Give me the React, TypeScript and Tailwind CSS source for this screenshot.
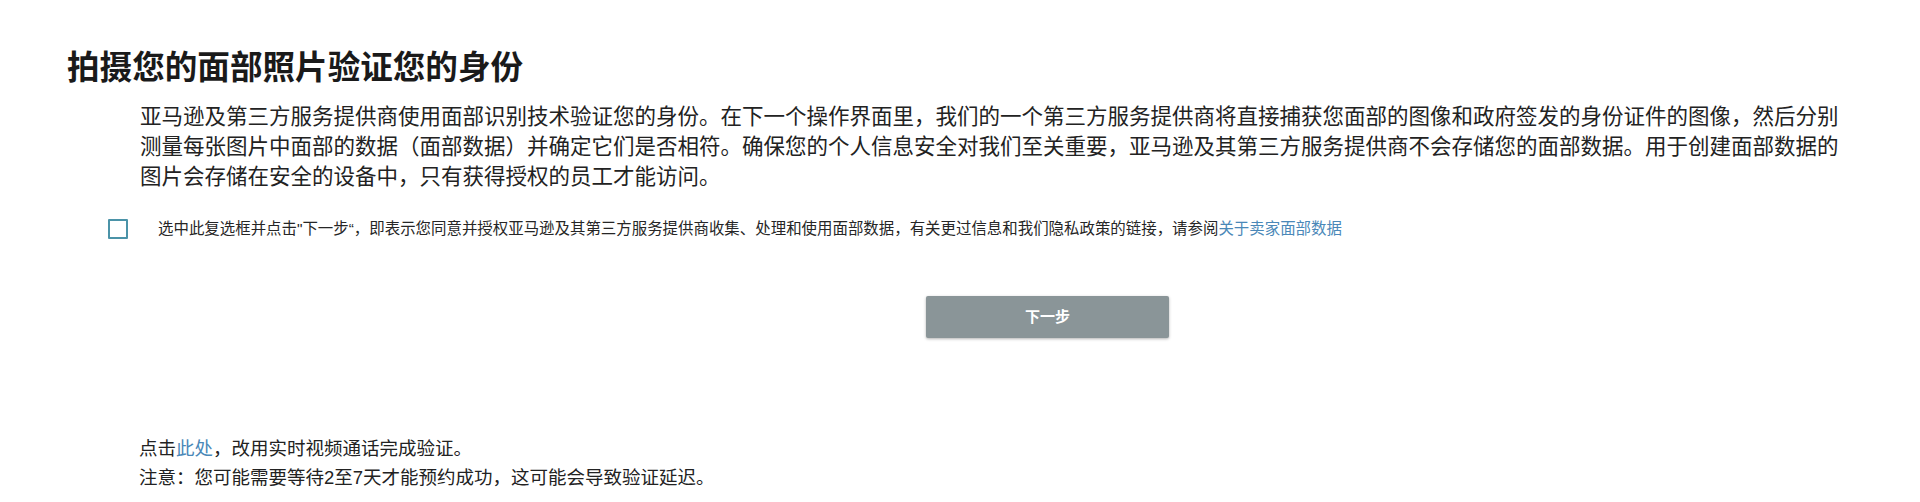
import { useState } from 'react';

const FONT = "font-['Liberation_Sans','Noto_Sans_CJK_SC',sans-serif]";

export default function App() {
  const [agreed, setAgreed] = useState(false);

  return (
    <div className={`${FONT} min-h-[502px] w-full bg-white pl-[67px] pt-[48px] text-[#222]`}>
      {/* Title */}
      <h1 className="text-[32.6px] font-bold leading-[40px] text-[#1a1a1a]">拍摄您的面部照片验证您的身份</h1>

      {/* Intro */}
      <p className="mt-[14px] ml-[73px] w-[1712px] text-[21.5px] leading-[30px] text-[#222]">
        亚马逊及第三方服务提供商使用面部识别技术验证您的身份。在下一个操作界面里，我们的一个第三方服务提供商将直接捕获您面部的图像和政府签发的身份证件的图像，然后分别测量每张图片中面部的数据（面部数据）并确定它们是否相符。确保您的个人信息安全对我们至关重要，亚马逊及其第三方服务提供商不会存储您的面部数据。用于创建面部数据的图片会存储在安全的设备中，只有获得授权的员工才能访问。
      </p>

      {/* Consent checkbox */}
      <div className="mt-[27px] ml-[41px] flex items-center gap-[30px]">
        <button
          type="button"
          onClick={() => setAgreed(!agreed)}
          className="flex h-[20px] w-[20px] shrink-0 items-center justify-center rounded-[1px] border-2 border-[#4b93a8] bg-white"
        >
          {agreed && (
            <svg viewBox="0 0 16 16" className="h-[14px] w-[14px]" fill="none" stroke="#4b93a8" strokeWidth={2.4}>
              <path d="M3 8.5l3.2 3.2L13 4.8" />
            </svg>
          )}
        </button>
        <span className="text-[15.45px] leading-[20px] text-[#262626]">
          选中此复选框并点击"下一步“，即表示您同意并授权亚马逊及其第三方服务提供商收集、处理和使用面部数据，有关更过信息和我们隐私政策的链接，请参阅
          <a href="#" className="text-[#4a88b8]">关于卖家面部数据</a>
        </span>
      </div>

      {/* Next */}
      <div className="mt-[57px] ml-[859px]">
        <button
          type="button"
          className="h-[42px] w-[243px] rounded-[2px] bg-[#8a9598] text-[15px] font-bold text-white shadow-[0_1px_3px_rgba(0,0,0,0.3)]"
        >
          下一步
        </button>
      </div>

      {/* Footer notes */}
      <div className="mt-[96px] ml-[72px] text-[18.5px] leading-[29px] text-[#222]">
        <p>
          点击<a href="#" className="text-[#4a88b8]">此处</a>，改用实时视频通话完成验证。
        </p>
        <p>注意：您可能需要等待2至7天才能预约成功，这可能会导致验证延迟。</p>
      </div>
    </div>
  );
}
